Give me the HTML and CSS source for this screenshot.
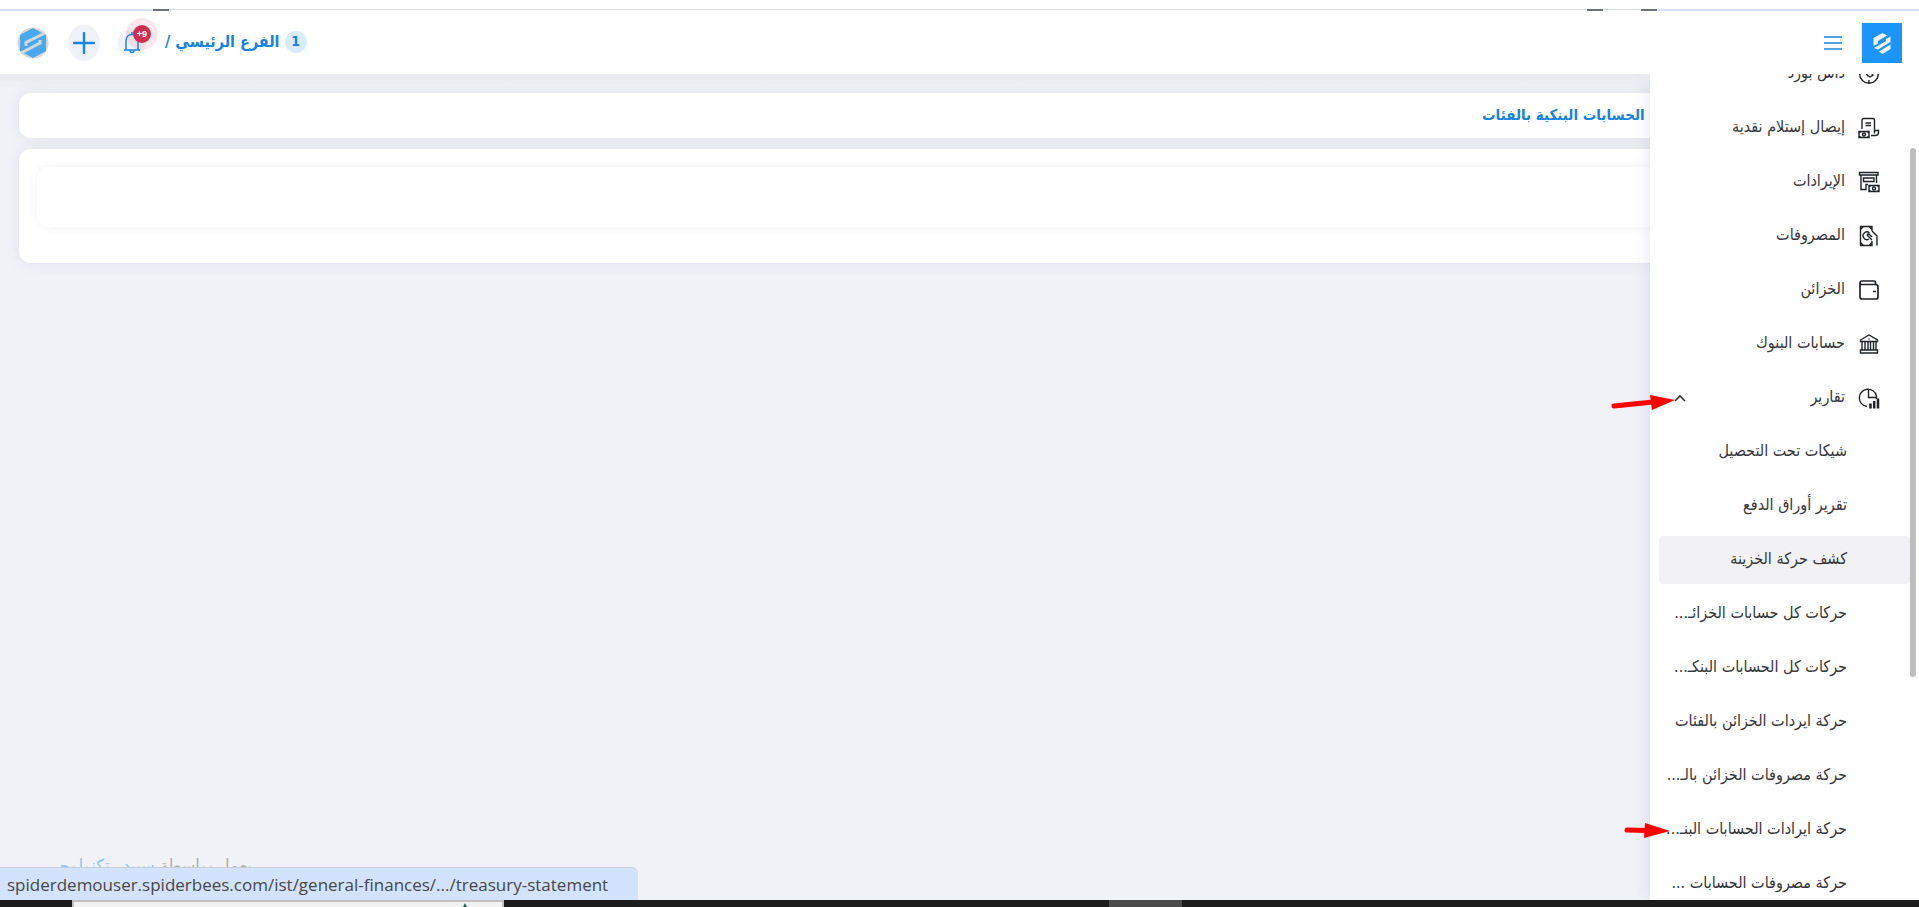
FILE: index.html
```
<!DOCTYPE html>
<html lang="ar" dir="rtl">
<head>
  <meta charset="UTF-8">
  <meta name="viewport" content="width=device-width, initial-scale=1.0">
  <title>حركة ايرادات الحسابات البنكية بالفئات</title>
  <link rel="stylesheet" href="styles.css">
</head>
<body>
  <div class="screen">
    <div class="tab-strip"><span class="strip-start"></span><span class="strip-mark"></span><span class="strip-line"></span><span class="strip-mark"></span><span class="strip-gap"></span><span class="strip-mark"></span><span class="strip-end"></span></div>

    <header class="topbar">
      <div class="topbar-side">
        <a class="brand" href="#" aria-label="سبيدر">
          <svg width="40" height="40" viewBox="0 0 40 40">
            <path d="M11.500 15L20.500 10L25 12.500L16 18V20.500L11.500 23Z" fill="#f4f4f4"/>
            <path d="M12 25L24 18V16L28.500 13.500V19L16 26.500Z" fill="#f4f4f4"/>
            <path d="M17 28.500L28.500 21.500V26L20.500 31Z" fill="#f4f4f4"/>
          </svg>
        </a>
        <button class="menu-toggle" type="button" aria-label="القائمة">
          <svg width="18" height="14" viewBox="0 0 18 14" stroke="#1b84dd" stroke-width="1.3"><path d="M0 1H18M0 7H18M0 13H18"/></svg>
        </button>
      </div>
      <div class="topbar-side user-side">
        <div class="branch"><span class="count">1</span><a href="#">الفرع الرئيسي /</a></div>
        <button class="bell" type="button" aria-label="الإشعارات">
          <svg width="18" height="22" viewBox="0 0 18 22" fill="none" stroke="#1a86e0" stroke-width="1.5"><path d="M1 18H17M3 18V9C3 5 5.500 2.500 9 2.500S15 5 15 9V18M7 18.500A2 2 0 0 0 11 18.500M9 0V2.500"/></svg>
          <span class="bell-count" dir="ltr">+9</span>
        </button>
        <button class="add" type="button" aria-label="إضافة">
          <svg width="22" height="22" viewBox="0 0 22 22" stroke="#1387e6" stroke-width="2.4" stroke-linecap="round"><path d="M11 1V21M1 11H21"/></svg>
        </button>
        <a class="avatar" href="#" aria-label="الحساب">
          <svg width="32" height="32" viewBox="0 0 32 32">
            <circle cx="16" cy="16" r="15.500" fill="#dcd5cf"/>
            <path d="M3 8L16 1L29 8V24L16 31L3 24Z" fill="#48a8f0"/>
            <path d="M28 6L9 15.500V19M4 26L23 16V13" fill="none" stroke="#d5d7d9" stroke-width="3"/>
          </svg>
        </a>
      </div>
    </header>

    <main class="content">
      <section class="card title-card">
        <h1>حركة ايرادات الحسابات البنكية بالفئات</h1>
      </section>
      <section class="card">
        <div class="filter-box"></div>
      </section>
    </main>

    <footer class="credit">يعمل بواسطة <a href="#">سبيدر تكنولوجي .</a></footer>

    <nav class="sidebar">
      <a class="item" href="#">
        <svg class="icon" viewBox="0 0 22 22"><circle cx="11" cy="11" r="9.300"/><path d="M5 6L10 13M9 12L12 14L15 12L12 8M11 17V20"/></svg>
        <span>داش بورد</span>
      </a>
      <a class="item" href="#">
        <svg class="icon" viewBox="0 0 22 22"><path d="M4 12V3Q4 1.500 5.500 1.500H15Q16.500 1.500 16.500 3V13.500H20.500V16Q20 18.500 17.500 18.500H13M16.500 13.500V16.500M7.500 6H13M7.500 8.500H13"/><path d="M1 14.500H11V20.500H1ZM1 16L3 14.500M1 19L3 20.500M11 16L9 14.500M11 19L9 20.500"/><circle cx="6" cy="17.500" r="1.500"/></svg>
        <span>إيصال إستلام نقدية</span>
      </a>
      <a class="item" href="#">
        <svg class="icon" viewBox="0 0 22 22"><path d="M1.500 1.500H20V4H1.500ZM3 4V18.500H8V13.500H10M18.500 4V12M5.500 7H16V10.500H5.500Z"/><path d="M11 14.500H21V20.500H11ZM11 16L13 14.500M11 19L13 20.500M21 16L19 14.500M21 19L19 20.500"/><circle cx="16" cy="17.500" r="1.500"/></svg>
        <span>الإيرادات</span>
      </a>
      <a class="item" href="#">
        <svg class="icon" viewBox="0 0 22 22"><path d="M14 6V1.500H2.500V20.500H14V16M2.500 4.500L5.500 1.500M2.500 17.500L5.500 20.500M14 17.500L11 20.500M11 1.500L14 4.500"/><path d="M11.500 8A3.800 3.800 0 1 0 11 14M14 6L19 11V20.500M9 10L14 15M9 10Q10 8 12 10L14 12"/></svg>
        <span>المصروفات</span>
      </a>
      <a class="item" href="#">
        <svg class="icon" viewBox="0 0 22 22"><path d="M17.500 5V3.500Q17.500 2 16 2H4Q2 2 2 4V18Q2 20 4 20H18Q20 20 20 18V8Q20 5.500 17.500 5.500H4Q2 5.500 2 4M15 12.500H18" stroke-width="1.700"/></svg>
        <span>الخزائن</span>
      </a>
      <a class="item" href="#">
        <svg class="icon" viewBox="0 0 22 22"><path d="M2.500 7L11 2L19.500 7V8.500H2.500ZM4 8.500V17M7 8.500V17M10 8.500V17M12.500 8.500V17M15.500 8.500V17M18 8.500V17M2.500 17H19.500V20H2.500ZM10.500 6H11.500"/></svg>
        <span>حسابات البنوك</span>
      </a>
      <a class="item" href="#">
        <svg class="icon" viewBox="0 0 22 22"><path d="M18.500 12V9A8.700 8.700 0 1 0 9 19.500M10.500 1.500V10.500H18.500"/><path d="M12.500 16.500V21.500M16.200 14V21.500M20 11.500V21.500" stroke-width="2.500"/></svg>
        <span>تقارير</span>
        <svg class="chevron" width="12" height="8" viewBox="0 0 12 8"><path d="M1 7L6 2L11 7"/></svg>
      </a>
      <a class="item sub" href="#">شيكات تحت التحصيل</a>
      <a class="item sub" href="#">تقرير أوراق الدفع</a>
      <a class="item sub hovered" href="#">كشف حركة الخزينة</a>
      <a class="item sub" href="#">حركات كل حسابات الخزائـ...</a>
      <a class="item sub" href="#">حركات كل الحسابات البنكـ...</a>
      <a class="item sub" href="#">حركة ايردات الخزائن بالفئات</a>
      <a class="item sub" href="#">حركة مصروفات الخزائن بالـ...</a>
      <a class="item sub" href="#">حركة ايرادات الحسابات البنـ...</a>
      <a class="item sub" href="#">حركة مصروفات الحسابات ...</a>
      <div class="scroll-thumb"></div>
    </nav>

    <svg class="arrow arrow-reports" width="64" height="18" viewBox="0 0 64 18"><path d="M3 12L42 8" stroke="#f00" stroke-width="5" stroke-linecap="round"/><path d="M39 1L64 6L41 16Z" fill="#f00"/></svg>
    <svg class="arrow arrow-banks" width="46" height="18" viewBox="0 0 46 18"><path d="M3 8L24 8.500" stroke="#f00" stroke-width="5" stroke-linecap="round"/><path d="M21 1L46 9L20 16Z" fill="#f00"/></svg>

    <div class="link-status" dir="ltr">spiderdemouser.spiderbees.com/ist/general-finances/.../treasury-statement</div>
  </div>
  <div class="taskbar" dir="ltr"><div class="search-box"><span class="tree"></span></div><div class="task-active"></div></div>
</body>
</html>
```
FILE: styles.css
```
* {
  box-sizing: border-box;
}
body {
  margin: 0;
  height: 100vh;
  display: flex;
  flex-direction: column;
  overflow: hidden;
  background: #f1f2f8;
  color: #34363a;
  font-family: "DejaVu Sans Condensed", "DejaVu Sans", sans-serif;
  font-size: 16px;
}
a {
  color: inherit;
  text-decoration: none;
}
button {
  padding: 0;
  border: none;
  background: none;
  cursor: pointer;
}
svg {
  display: block;
}
.screen {
  position: relative;
  flex: 1;
  min-height: 0;
  display: flex;
  flex-direction: column;
  overflow: hidden;
}

/* top */
.tab-strip {
  position: relative;
  z-index: 3;
  display: flex;
  direction: ltr;
  height: 11px;
  padding-top: 9px;
  background: #fff;
}
.strip-start {
  width: 153px;
  background: #d6e1f6;
}
.strip-mark {
  width: 16px;
  background: #6d7076;
}
.strip-line {
  flex: 1;
  border-top: 1px solid #dcdde0;
}
.strip-gap {
  width: 38px;
  border-top: 1px solid #dcdde0;
}
.strip-end {
  width: 262px;
  background: #d6e1f6;
}
.topbar {
  position: relative;
  z-index: 3;
  display: flex;
  justify-content: space-between;
  height: 63px;
  padding: 0 17px;
  background: #fff;
}
.topbar::after {
  content: "";
  position: absolute;
  z-index: -1;
  top: 100%;
  left: 0;
  right: 269px;
  height: 16px;
  background: linear-gradient(#e9eaf0, rgba(233, 234, 240, 0));
}
.topbar-side {
  display: flex;
  align-items: center;
}
.brand {
  background: #1c94f9;
}
.menu-toggle {
  margin: 0 20px;
}
.branch {
  display: flex;
  align-items: center;
  gap: 5px;
  padding-bottom: 2px;
  color: #1683df;
  font-weight: bold;
}
.count {
  width: 22px;
  height: 22px;
  border-radius: 50%;
  background: #d8ecfe;
  font-size: 14px;
  line-height: 20px;
  text-align: center;
}
.bell {
  position: relative;
  display: flex;
  align-items: center;
  justify-content: center;
  width: 28px;
  height: 28px;
  margin: 0 19px 0 18px;
  border-radius: 50%;
  background: #f1f2f8;
}
.bell-count {
  position: absolute;
  top: -4px;
  left: 15px;
  width: 18px;
  height: 18px;
  border-radius: 50%;
  background: #d02e50;
  box-shadow: 0 0 0 7px rgba(208, 46, 80, 0.1);
  color: #fff;
  font-size: 9px;
  font-weight: bold;
  line-height: 18px;
}
.add {
  display: flex;
  align-items: center;
  justify-content: center;
  width: 32px;
  height: 36px;
  margin-left: 19px;
  border-radius: 50%;
  background: #f1f2f8;
}

/* page */
.content {
  display: flex;
  flex-direction: column;
  gap: 11px;
  padding: 19px;
}
.card {
  padding: 18px 18px 36px;
  border-radius: 12px;
  background: #fff;
  box-shadow: 0 0 16px rgba(40, 45, 70, 0.07);
}
.title-card {
  padding: 12px 164px 12px 18px;
}
h1 {
  margin: 0;
  color: #1683df;
  font-size: 15px;
  line-height: 21px;
}
.filter-box {
  height: 60px;
  border-radius: 12px;
  background: #fff;
  box-shadow: 0 0 12px rgba(0, 0, 0, 0.05);
}
.credit {
  margin-top: auto;
  padding: 0 36px 14px;
  color: #aaadb1;
  font-size: 18px;
  line-height: 40px;
  text-align: left;
}
.credit a {
  color: #8ec5ef;
}

/* side menu, scrolled under the top bar */
.sidebar {
  position: absolute;
  z-index: 2;
  top: 0;
  right: 0;
  bottom: 0;
  width: 269px;
  padding: 47px 9px 0;
  overflow: hidden;
  background: #fff;
  box-shadow: 0 0 16px rgba(40, 45, 70, 0.12);
}
.item {
  display: flex;
  align-items: center;
  gap: 13px;
  height: 48px;
  margin: 3px 0 6px;
  padding: 0 30px 0 15px;
  border-radius: 4px;
  line-height: 24px;
  white-space: nowrap;
}
.item span {
  padding-bottom: 2px;
}
.sub {
  padding: 0 63px 2px 0;
}
.hovered {
  background: #f2f2f4;
}
.icon {
  width: 22px;
  height: 22px;
  fill: none;
  stroke: #202226;
  stroke-width: 1.4;
}
.chevron {
  margin-right: auto;
  fill: none;
  stroke: #34363a;
  stroke-width: 1.6;
}
.scroll-thumb {
  position: absolute;
  top: 148px;
  right: 3px;
  width: 6px;
  height: 529px;
  border-radius: 3px;
  background: #bebebe;
}

/* overlays */
.arrow {
  position: absolute;
  z-index: 4;
}
.arrow-reports {
  top: 394px;
  right: 244px;
}
.arrow-banks {
  top: 822px;
  right: 249px;
}
.link-status {
  position: absolute;
  z-index: 4;
  left: 0;
  bottom: 0;
  width: 638px;
  height: 33px;
  padding-left: 7px;
  border-top: 1px solid #c9cdd8;
  border-top-right-radius: 6px;
  background: #d3e3fd;
  color: #474747;
  font-family: "Open Sans", sans-serif;
  font-size: 17px;
  line-height: 33px;
  text-align: left;
  white-space: nowrap;
}
.taskbar {
  display: flex;
  height: 7px;
  background: #1c1c1c;
}
.search-box {
  display: flex;
  justify-content: flex-end;
  width: 432px;
  margin-left: 72px;
  padding: 1px 35px 0 0;
  border: 2px solid #c4bfc0;
  border-bottom: none;
  background: #f2f2f2;
}
.tree {
  width: 4px;
  background: #0f6b55;
  clip-path: polygon(50% 0, 100% 100%, 0 100%);
}
.task-active {
  width: 73px;
  margin-left: 605px;
  background: #4b4b4b;
}
```
